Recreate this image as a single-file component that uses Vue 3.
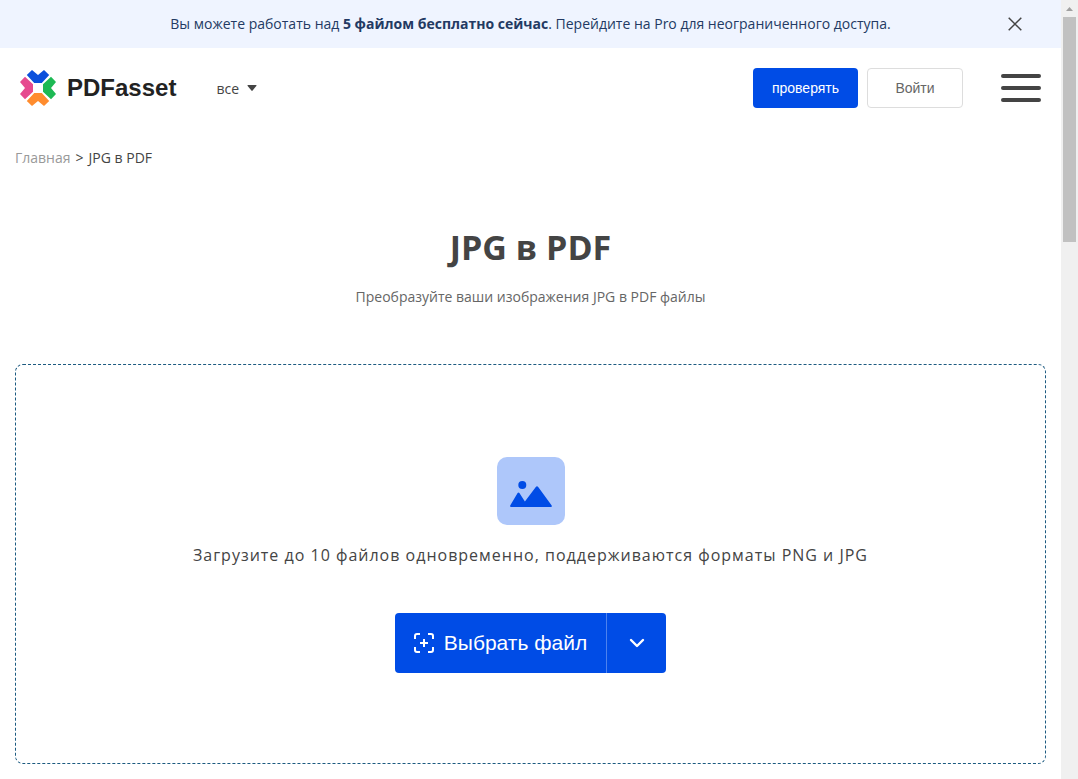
<script setup>
import { ref } from 'vue'

const bannerOpen = ref(true)
const petals = [
  { color: '#0b50dc', angle: 0 },
  { color: '#1db954', angle: 90 },
  { color: '#ff8c2e', angle: 180 },
  { color: '#e64a8f', angle: 270 },
]
</script>

<template>
  <div class="shell">
    <div class="page">
      <div v-if="bannerOpen" class="banner">
        <p class="banner-text">
          Вы можете работать над <strong>5 файлом бесплатно сейчас</strong>. Перейдите на Pro для неограниченного доступа.
        </p>
        <button class="close" type="button" aria-label="Закрыть" @click="bannerOpen = false">
          <svg width="14" height="14" viewBox="0 0 14 14" fill="none" stroke="#444" stroke-width="1.5">
            <path d="M.7.7l12.6 12.6M13.3.7L.7 13.3" />
          </svg>
        </button>
      </div>

      <header class="header">
        <a class="logo" href="#">
          <svg width="36" height="36" viewBox="0 0 36 36">
            <path
              v-for="p in petals"
              :key="p.angle"
              :fill="p.color"
              :transform="`rotate(${p.angle} 18 18)`"
              d="M6.8 5L12 0L18 5L24 0L29.2 5L21.8 13H14.2Z"
            />
          </svg>
          <span>PDFasset</span>
        </a>
        <button class="all" type="button">
          все
          <svg width="10" height="6" viewBox="0 0 10 6"><path d="M1 0H9Q10 0 9.3 1L5.6 5.6Q5 6.2 4.4 5.6L.7 1Q0 0 1 0Z" fill="#444" /></svg>
        </button>
        <nav class="actions">
          <button class="btn primary" type="button">проверять</button>
          <button class="btn outline" type="button">Войти</button>
        </nav>
        <button class="burger" type="button" aria-label="Меню">
          <span></span><span></span><span></span>
        </button>
      </header>

      <nav class="crumbs">
        <a href="#">Главная</a><span>&gt;</span><span>JPG в PDF</span>
      </nav>

      <main class="main">
        <h1>JPG в PDF</h1>
        <p class="subtitle">Преобразуйте ваши изображения JPG в PDF файлы</p>

        <section class="drop">
          <svg width="68" height="68" viewBox="0 0 68 68">
            <rect width="68" height="68" rx="10" fill="#aec7fa" />
            <g fill="#004ce6">
              <circle cx="25.3" cy="28" r="4" />
              <path d="M13.2 48.6L20.6 36Q21.5 34.8 22.4 36L27.9 44.4L38.8 29.9Q40 28.5 41.2 29.9L54.7 48.5Q55.4 50 53.8 50H14Q12.5 50 13.2 48.6Z" />
            </g>
          </svg>
          <p class="hint">Загрузите до 10 файлов одновременно, поддерживаются форматы PNG и JPG</p>
          <div class="picker">
            <button class="choose" type="button">
              <svg width="20" height="20" viewBox="0 0 20 20" fill="none" stroke="#fff" stroke-width="2">
                <path d="M1 6V3Q1 1 3 1H6M14 1H17Q19 1 19 3V6M19 14V17Q19 19 17 19H14M6 19H3Q1 19 1 17V14M10 6V14M6 10H14" />
              </svg>
              Выбрать файл
            </button>
            <button class="more" type="button" aria-label="Другие источники">
              <svg width="16" height="10" viewBox="0 0 16 10" fill="none" stroke="#fff" stroke-width="2.4" stroke-linecap="round" stroke-linejoin="round">
                <path d="M2 2L8 8L14 2" />
              </svg>
            </button>
          </div>
        </section>
      </main>
    </div>

    <div class="scrollbar" aria-hidden="true">
      <svg width="7" height="4" viewBox="0 0 7 4"><path d="M0 4L3.5 0L7 4Z" fill="#a0a0a0" /></svg>
      <div class="thumb"></div>
    </div>
  </div>
</template>

<style>
body {
  margin: 0;
  background: #fff;
}
</style>

<style scoped>
* {
  box-sizing: border-box;
}

.shell {
  display: flex;
  min-height: 100vh;
  font-family: "Open Sans", "Noto Sans", sans-serif;
  font-size: 14px;
  color: #444;
}

.page {
  flex: 1;
  min-width: 0;
}

button {
  padding: 0;
  border: 0;
  background: none;
  font: inherit;
  color: inherit;
  cursor: pointer;
}

a {
  color: inherit;
  text-decoration: none;
}

svg {
  display: block;
  flex: none;
}

p,
h1 {
  margin: 0;
}

.banner {
  display: grid;
  grid-template-columns: 40px 1fr 40px;
  align-items: center;
  height: 48px;
  padding: 0 26px;
  background: #eff4ff;
  color: #233a63;
}

.banner-text {
  grid-column: 2;
  line-height: 20px;
  text-align: center;
}

.close {
  justify-self: end;
  padding: 0 13px 0 0;
}

.header {
  display: flex;
  align-items: center;
  height: 80px;
  padding: 0 20px;
}

.logo {
  display: flex;
  align-items: center;
  gap: 11px;
  font: bold 24px/36px "Liberation Sans", Arial, sans-serif;
  color: #222;
}

.all {
  display: flex;
  align-items: center;
  gap: 8px;
  margin-left: 40px;
}

.actions {
  display: flex;
  gap: 9px;
  margin-left: auto;
}

.btn {
  height: 40px;
  border-radius: 4px;
  font: 14px/20px "Liberation Sans", Arial, sans-serif;
}

.primary {
  width: 105px;
  background: #004ce6;
  color: #fff;
}

.outline {
  width: 96px;
  border: 1px solid #ddd;
  color: #666;
}

.burger {
  display: flex;
  flex-direction: column;
  gap: 8px;
  width: 40px;
  margin-left: 38px;
}

.burger span {
  height: 4px;
  border-radius: 2px;
  background: #444;
}

.crumbs {
  display: flex;
  gap: 5px;
  padding: 20px 15px 0;
  line-height: 20px;
}

.crumbs a {
  color: #999;
}

.main {
  padding: 56px 15px 15px;
  text-align: center;
}

h1 {
  font-size: 34px;
  line-height: 46px;
}

.subtitle {
  margin-top: 17px;
  line-height: 20px;
  color: #666;
}

.drop {
  display: flex;
  flex-direction: column;
  align-items: center;
  margin-top: 57px;
  padding: 92px 20px 90px;
  border: 1px dashed #1c5a80;
  border-radius: 8px;
}

.hint {
  margin-top: 18px;
  font-size: 16px;
  line-height: 24px;
  letter-spacing: 1px;
}

.picker {
  display: flex;
  height: 60px;
  margin-top: 46px;
  overflow: hidden;
  border-radius: 4px;
  background: #004ce6;
  color: #fff;
}

.choose {
  display: flex;
  align-items: center;
  gap: 10px;
  padding: 0 19px;
  font: 21px/30px "Liberation Sans", Arial, sans-serif;
}

.more {
  display: flex;
  align-items: center;
  justify-content: center;
  width: 60px;
  border-left: 1px solid #4d82ee;
}

.scrollbar {
  display: flex;
  flex-direction: column;
  align-items: center;
  gap: 6px;
  width: 17px;
  padding-top: 7px;
  background: #f0f0f0;
}

.thumb {
  width: 13px;
  height: 225px;
  background: #c1c1c1;
}
</style>
